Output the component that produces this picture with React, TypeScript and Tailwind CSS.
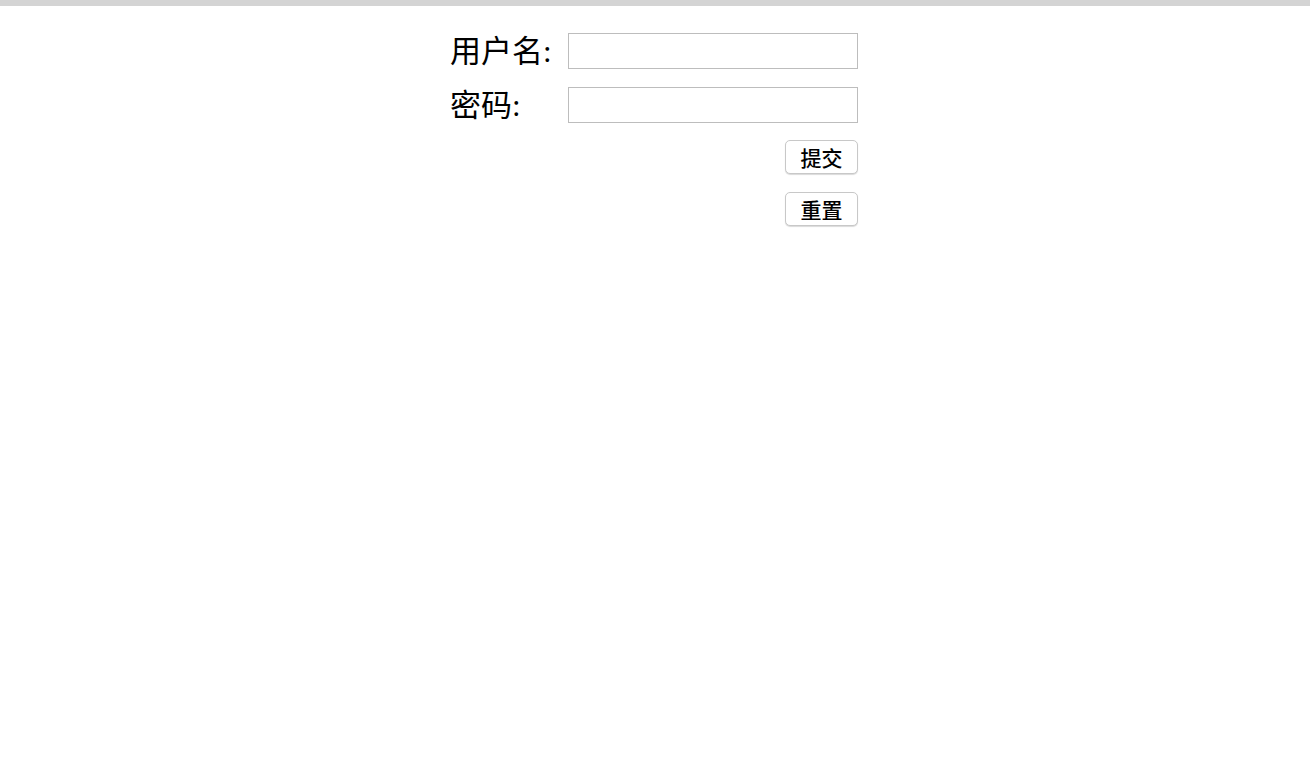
export default function App() {
  return (
    <div className="min-h-screen bg-white">
      {/* 顶部灰条 */}
      <div className="h-[6px] bg-[#d4d4d4]" />

      <form className="mx-auto mt-[27px] grid w-[410px] grid-cols-[118px_290px] gap-y-[18px] [font-family:'Liberation_Serif','Noto_Sans_CJK_SC',serif]">
        <label className="flex h-[36px] items-center text-[31px] leading-none text-black">用户名:</label>
        <input type="text" className="h-[36px] border border-[#bdbdbd] bg-white px-1 outline-none" />

        <label className="flex h-[36px] items-center text-[31px] leading-none text-black">密码:</label>
        <input type="password" className="h-[36px] border border-[#bdbdbd] bg-white px-1 outline-none" />
      </form>

      <div className="mx-auto mt-[17px] flex w-[410px] flex-col items-end gap-[18px] pr-[2px]">
        <button
          type="submit"
          className="h-[34px] w-[73px] rounded-[5px] border border-[#c8c8c8] bg-white text-[21px] font-medium leading-none text-black shadow-[0_1px_1px_rgba(0,0,0,0.15)] [font-family:'Noto_Sans_CJK_SC',sans-serif]"
        >
          提交
        </button>
        <button
          type="reset"
          className="h-[34px] w-[73px] rounded-[5px] border border-[#c8c8c8] bg-white text-[21px] font-medium leading-none text-black shadow-[0_1px_1px_rgba(0,0,0,0.15)] [font-family:'Noto_Sans_CJK_SC',sans-serif]"
        >
          重置
        </button>
      </div>
    </div>
  );
}
